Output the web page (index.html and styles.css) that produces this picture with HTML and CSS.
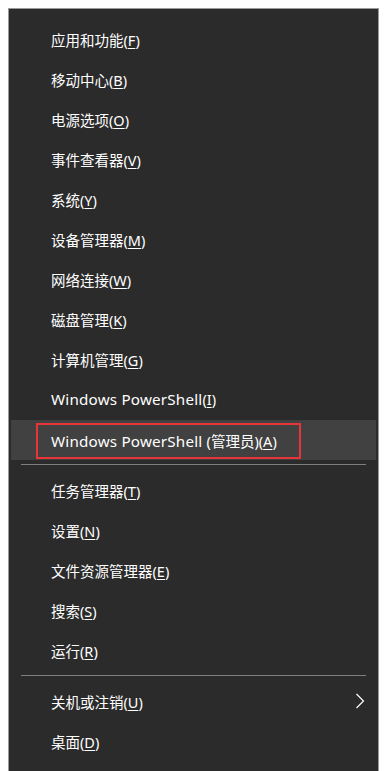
FILE: index.html
```html
<!DOCTYPE html>
<html lang="zh-CN">
<head>
<meta charset="utf-8">
<link rel="stylesheet" href="styles.css">
</head>
<body>
<div class="menu">
  <div class="item"><span>应用和功能(<u>F</u>)</span></div>
  <div class="item"><span>移动中心(<u>B</u>)</span></div>
  <div class="item"><span>电源选项(<u>O</u>)</span></div>
  <div class="item"><span>事件查看器(<u>V</u>)</span></div>
  <div class="item"><span>系统(<u>Y</u>)</span></div>
  <div class="item"><span>设备管理器(<u>M</u>)</span></div>
  <div class="item"><span>网络连接(<u>W</u>)</span></div>
  <div class="item"><span>磁盘管理(<u>K</u>)</span></div>
  <div class="item"><span>计算机管理(<u>G</u>)</span></div>
  <div class="item"><span><span class="lat">Windows PowerShell</span>(<u>I</u>)</span></div>
  <div class="item active"><span class="boxed"><span><span class="lat">Windows PowerShell </span>(管理员)(<u>A</u>)</span></span></div>
  <div class="sep"></div>
  <div class="item"><span>任务管理器(<u>T</u>)</span></div>
  <div class="item"><span>设置(<u>N</u>)</span></div>
  <div class="item"><span>文件资源管理器(<u>E</u>)</span></div>
  <div class="item"><span>搜索(<u>S</u>)</span></div>
  <div class="item"><span>运行(<u>R</u>)</span></div>
  <div class="sep"></div>
  <div class="item sub"><span>关机或注销(<u>U</u>)</span>
    <svg class="chev" width="10" height="16" viewBox="0 0 10 16"><path d="M1.5 1 L8.5 8 L1.5 15" fill="none" stroke="#ffffff" stroke-width="1.2"/></svg>
  </div>
  <div class="item"><span>桌面(<u>D</u>)</span></div>
</div>
</body>
</html>
```
FILE: styles.css
```css
html, body {
  margin: 0;
  padding: 0;
  background: #ffffff;
  height: 100%;
  overflow: hidden;
}
body {
  padding: 8px 8px 0 8px;
  box-sizing: border-box;
}
.menu {
  width: 371px;
  box-sizing: border-box;
  background: #2b2b2b;
  border: 1px solid #9a9a9a;
  border-bottom: none;
  padding: 11px 2px 20px 2px;
  font-family: "Noto Sans", "Noto Sans CJK SC", sans-serif;
  font-size: 14.5px;
  color: #ffffff;
}
.item {
  height: 40px;
  box-sizing: border-box;
  padding-bottom: 2px;
  display: flex;
  align-items: center;
  padding-left: 40px;
}
.lat {
  font-size: 15.2px;
  letter-spacing: 0.2px;
}
.item u {
  text-decoration-thickness: 1px;
  text-underline-offset: 2px;
}
.item.active {
  background: #414141;
  padding-bottom: 0;
  align-items: flex-start;
}
.boxed {
  display: flex;
  align-items: center;
  box-sizing: border-box;
  height: 36px;
  margin-top: 3px;
  margin-left: -15px;
  padding: 0 22px 1px 13px;
  border: 2px solid #e8353a;
}
.sep {
  height: 11px;
  display: flex;
  align-items: flex-start;
  padding: 4px 10px 0 10px;
  box-sizing: border-box;
}
.sep::after {
  content: "";
  display: block;
  width: 100%;
  height: 1px;
  background: #7f7f7f;
}
.sub {
  justify-content: space-between;
  padding-right: 11px;
}
.chev {
  display: block;
}
```
